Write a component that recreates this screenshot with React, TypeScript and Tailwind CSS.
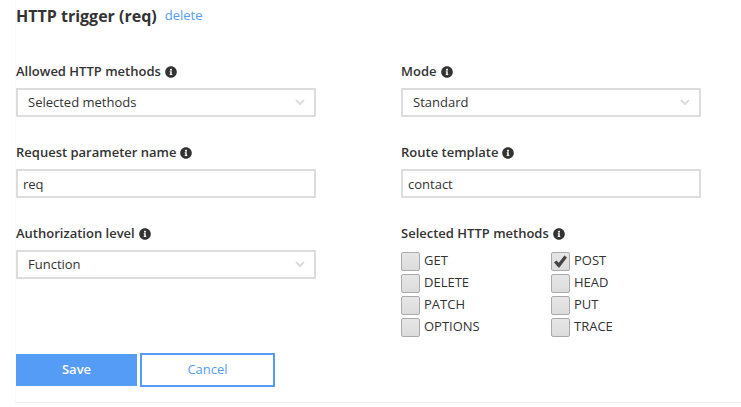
import { useState } from "react";
import type { ReactNode } from "react";
import { FaInfoCircle } from "react-icons/fa";

const METHODS = ["GET", "POST", "DELETE", "HEAD", "PATCH", "PUT", "OPTIONS", "TRACE"];

function Caption({ children }: { children: ReactNode }) {
  return (
    <span className="flex h-5 items-center gap-1 whitespace-nowrap font-semibold">
      {children}
      <FaInfoCircle aria-hidden="true" className="size-3 shrink-0" />
    </span>
  );
}

function SelectField({ label, options }: { label: string; options: string[] }) {
  return (
    <label className="block">
      <Caption>{label}</Caption>
      <span className="mt-[6px] grid items-center">
        <select className="col-start-1 row-start-1 h-[29px] w-full appearance-none rounded-none border-2 border-[#dddddd] bg-white pr-8 pl-[10px] outline-none focus:border-[#549cf5]">
          {options.map((option) => (
            <option key={option}>{option}</option>
          ))}
        </select>
        <svg
          aria-hidden="true"
          viewBox="0 0 10 7"
          className="pointer-events-none col-start-1 row-start-1 mr-[11px] h-[7px] w-[10px] justify-self-end"
        >
          <path d="M1 1 L5 5 L9 1" fill="none" stroke="#dddddd" strokeWidth="2" />
        </svg>
      </span>
    </label>
  );
}

function TextField({ label, value }: { label: string; value: string }) {
  return (
    <label className="block">
      <Caption>{label}</Caption>
      <input
        type="text"
        defaultValue={value}
        className="mt-[6px] block h-[29px] w-full border-2 border-[#dddddd] bg-white px-[5px] outline-none focus:border-[#549cf5]"
      />
    </label>
  );
}

function MethodOption({ name }: { name: string }) {
  const [checked, setChecked] = useState(name === "POST");
  return (
    <label className="flex h-[22px] items-start gap-1">
      <span className="mt-[2px] grid size-[19px] shrink-0 place-items-center">
        <input
          type="checkbox"
          checked={checked}
          onChange={() => setChecked(!checked)}
          className="col-start-1 row-start-1 size-[19px] appearance-none rounded-[2px] border border-[#aaaaaa] bg-linear-to-b from-[#e6e6e6] to-[#dcdcdc]"
        />
        {checked && (
          <svg
            aria-hidden="true"
            viewBox="0 0 13 13"
            className="pointer-events-none col-start-1 row-start-1 size-[13px]"
          >
            <path d="M0 7.6 L2.4 5.4 L4.8 7.8 L10.4 0.6 L13 2.6 L5.4 12.6 L4.4 12.6 Z" fill="#444444" />
          </svg>
        )}
      </span>
      <span className="leading-5">{name}</span>
    </label>
  );
}

export default function App() {
  return (
    <form
      onSubmit={(event) => event.preventDefault()}
      className="ml-[15px] border-b border-l border-b-[#f2f2f2] border-l-[#fafafa] bg-white pt-1 pb-[15px] font-['Open_Sans',sans-serif] text-[13px] text-[#333333]"
    >
      <header className="flex h-6 items-center gap-2">
        <h1 className="text-base font-bold">HTTP trigger (req)</h1>
        <a href="#delete" className="text-[#549cf5]">
          delete
        </a>
      </header>

      <div className="mt-[34px] grid grid-cols-[repeat(2,minmax(0,300px))] gap-x-[85px] gap-y-[26px]">
        <SelectField label="Allowed HTTP methods" options={["Selected methods", "All methods"]} />
        <SelectField label="Mode" options={["Standard", "Webhook"]} />
        <TextField label="Request parameter name" value="req" />
        <TextField label="Route template" value="contact" />
        <SelectField label="Authorization level" options={["Function", "Anonymous", "Admin"]} />
        <fieldset>
          <legend>
            <Caption>Selected HTTP methods</Caption>
          </legend>
          <div className="mt-[6px] grid grid-cols-2">
            {METHODS.map((name) => (
              <MethodOption key={name} name={name} />
            ))}
          </div>
        </fieldset>
      </div>

      <div className="mt-[15px] flex items-center gap-[3px]">
        <button type="submit" className="h-8 w-[121px] bg-[#549cf5] font-semibold text-white">
          Save
        </button>
        <button type="button" className="h-[34px] w-[135px] border-2 border-[#549cf5] bg-white text-[#549cf5]">
          Cancel
        </button>
      </div>
    </form>
  );
}
